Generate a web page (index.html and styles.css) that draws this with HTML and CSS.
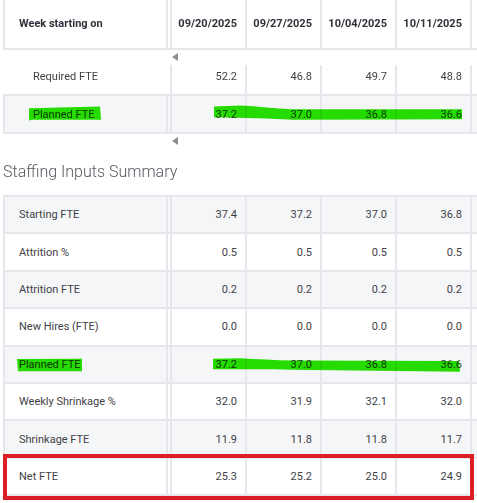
FILE: index.html
```html
<!DOCTYPE html>
<html lang="en">
<head>
<meta charset="utf-8">
<title>Staffing</title>
<link rel="stylesheet" href="styles.css">
</head>
<body>
<div class="page">
  <div class="row head">
    <div class="label">Week starting on</div>
    <div class="gap"></div>
    <div class="cell">09/20/2025</div>
    <div class="cell">09/27/2025</div>
    <div class="cell">10/04/2025</div>
    <div class="cell">10/11/2025</div>
    <div class="cell"></div>
  </div>
  <div class="strip"><span class="arrow"></span></div>
  <div class="row req">
    <div class="label sub">Required FTE</div>
    <div class="gap"></div>
    <div class="cell">52.2</div>
    <div class="cell">46.8</div>
    <div class="cell">49.7</div>
    <div class="cell">48.8</div>
    <div class="cell"></div>
  </div>
  <div class="row alt plan1">
    <div class="label sub">Planned FTE</div>
    <div class="gap"></div>
    <div class="cell">37.2</div>
    <div class="cell">37.0</div>
    <div class="cell">36.8</div>
    <div class="cell">36.6</div>
    <div class="cell"></div>
    <svg class="marker" viewBox="3 96 474 38" preserveAspectRatio="none" aria-hidden="true">
      <path d="M29 109 L100 107 L101 121 L31 121 L29 122 Z"/>
      <path d="M214 107 L240 106 C258 107 275 109 292 110 L462 110 L462 120.5 L292 121 C270 120 248 119 214 118.5 Z"/>
    </svg>
  </div>
  <div class="strip"><span class="arrow"></span></div>

  <h2 class="section-title">Staffing Inputs Summary</h2>

  <div class="summary">
    <div class="row alt">
      <div class="label">Starting FTE</div><div class="gap"></div>
      <div class="cell">37.4</div><div class="cell">37.2</div><div class="cell">37.0</div><div class="cell">36.8</div><div class="cell"></div>
    </div>
    <div class="row">
      <div class="label">Attrition %</div><div class="gap"></div>
      <div class="cell">0.5</div><div class="cell">0.5</div><div class="cell">0.5</div><div class="cell">0.5</div><div class="cell"></div>
    </div>
    <div class="row alt">
      <div class="label">Attrition FTE</div><div class="gap"></div>
      <div class="cell">0.2</div><div class="cell">0.2</div><div class="cell">0.2</div><div class="cell">0.2</div><div class="cell"></div>
    </div>
    <div class="row">
      <div class="label">New Hires (FTE)</div><div class="gap"></div>
      <div class="cell">0.0</div><div class="cell">0.0</div><div class="cell">0.0</div><div class="cell">0.0</div><div class="cell"></div>
    </div>
    <div class="row alt">
      <div class="label">Planned FTE</div><div class="gap"></div>
      <div class="cell">37.2</div><div class="cell">37.0</div><div class="cell">36.8</div><div class="cell">36.6</div><div class="cell"></div>
      <svg class="marker" viewBox="3 346 474 38" preserveAspectRatio="none" aria-hidden="true">
        <path d="M17 359 L82 358.5 L82 372 L18 372 Z"/>
        <path d="M213 358.5 L240 358 C258 359 275 360 292 360.5 L459 361 L460 372.5 L292 370.5 C268 370 245 370 213 370 Z"/>
      </svg>
    </div>
    <div class="row">
      <div class="label">Weekly Shrinkage %</div><div class="gap"></div>
      <div class="cell">32.0</div><div class="cell">31.9</div><div class="cell">32.1</div><div class="cell">32.0</div><div class="cell"></div>
    </div>
    <div class="row alt">
      <div class="label">Shrinkage FTE</div><div class="gap"></div>
      <div class="cell">11.9</div><div class="cell">11.8</div><div class="cell">11.8</div><div class="cell">11.7</div><div class="cell"></div>
    </div>
    <div class="row net">
      <div class="label">Net FTE</div><div class="gap"></div>
      <div class="cell">25.3</div><div class="cell">25.2</div><div class="cell">25.0</div><div class="cell">24.9</div><div class="cell"></div>
      <div class="callout"></div>
    </div>
  </div>
</div>
</body>
</html>
```

FILE: styles.css
```css
* { box-sizing: border-box; }

html, body {
  margin: 0;
  background: #ffffff;
}

body {
  font-family: Roboto, "Noto Sans", "Liberation Sans", sans-serif;
  font-size: 11px;
  color: #3f4146;
  overflow: hidden;
}

.page {
  width: 477px;
  height: 503px;
  padding-left: 3px;
  overflow: hidden;
}

.row {
  position: relative;
  display: grid;
  grid-template-columns: 165px 2px 75px 75px 75px 75px 75px;
  border-bottom: 2px solid #e5e7ec;
  background: #ffffff;
}

.row.alt { background: #f5f6f8; }

.label {
  display: flex;
  align-items: center;
  padding-left: 14px;
  border-left: 2px solid #e5e7ec;
  border-right: 2px solid #e5e7ec;
  white-space: nowrap;
}

.label.sub { padding-left: 28px; }

.cell {
  display: flex;
  align-items: center;
  justify-content: flex-end;
  padding-right: 8px;
  border-left: 2px solid #e5e7ec;
  white-space: nowrap;
}

.head {
  height: 50px;
  font-weight: 700;
  color: #2e323a;
}

.head .label, .head .cell { padding-bottom: 1px; }

.strip {
  height: 15px;
  padding-top: 3px;
  padding-left: 169px;
}

.strip + .strip { height: 16px; }

.arrow {
  display: block;
  width: 0;
  height: 0;
  border-top: 4px solid transparent;
  border-bottom: 4px solid transparent;
  border-right: 6px solid #8e8e8e;
}

.req {
  height: 31px;
}

.req .label {
  border-left-color: transparent;
  border-right-color: transparent;
}

.req .label, .req .cell { padding-bottom: 6px; }

.plan1 { height: 38px; }

.section-title {
  margin: 0;
  height: 47px;
  padding-top: 13px;
  font-size: 16px;
  line-height: 20px;
  font-weight: 300;
  color: #555a60;
  white-space: nowrap;
}

.summary {
  border-top: 2px solid #e5e7ec;
  margin-top: -1px;
}

.summary .row { height: 37.4px; }

.marker {
  position: absolute;
  left: 0;
  top: 0;
  width: 474px;
  height: 100%;
  mix-blend-mode: multiply;
  pointer-events: none;
}

.marker path { fill: #27e300; }

.callout {
  position: absolute;
  left: 0;
  right: 3px;
  top: -5px;
  bottom: -6px;
  border: 4px solid #dc1f26;
  pointer-events: none;
}
```
